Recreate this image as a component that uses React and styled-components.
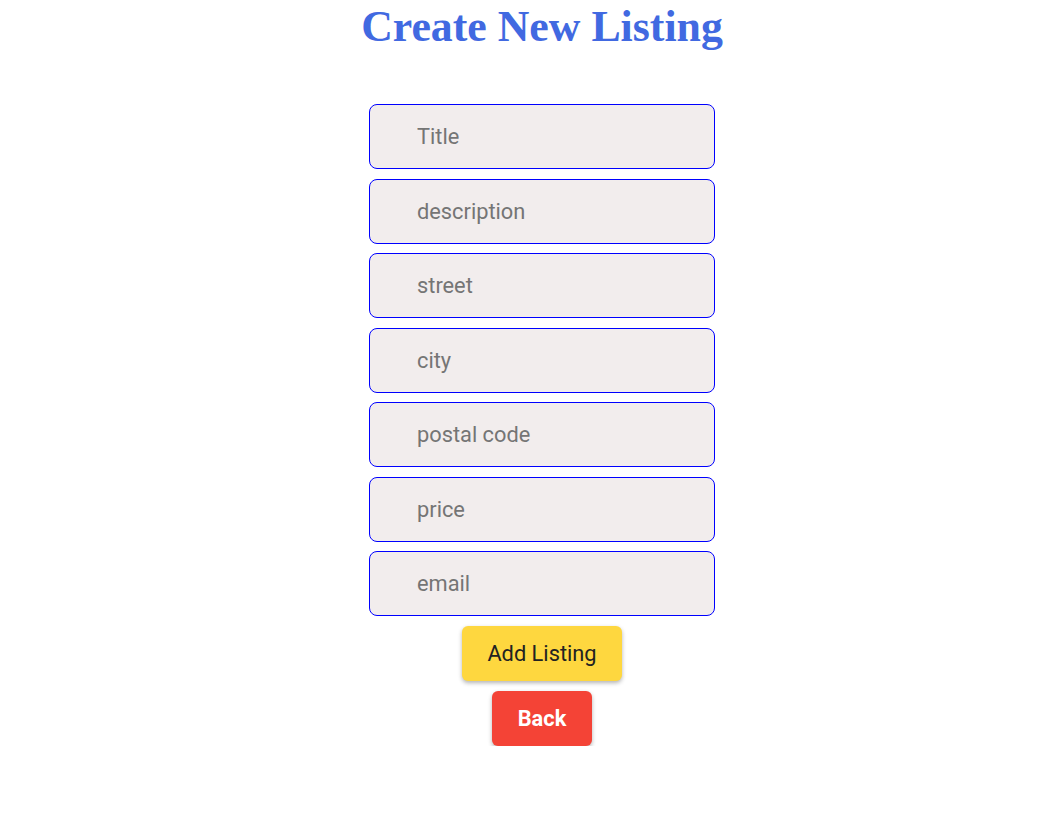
import React from 'react';
import styled, { createGlobalStyle } from 'styled-components';

const GlobalStyle = createGlobalStyle`
  body {
    margin: 0;
    background: #ffffff;
    font-family: Roboto, "Liberation Sans", sans-serif;
  }
`;

const Page = styled.div`
  display: flex;
  flex-direction: column;
  align-items: center;
  padding-left: 27px;
`;

const Title = styled.h1`
  margin: 0 0 52px;
  font-family: "Liberation Serif", "Times New Roman", serif;
  font-size: 43.8px;
  font-weight: 700;
  line-height: 52px;
  color: #4169e1;
`;

const Form = styled.form`
  display: flex;
  flex-direction: column;
  align-items: center;
  gap: 9.5px;
`;

const Field = styled.input`
  box-sizing: border-box;
  width: 346px;
  height: 65px;
  padding: 0 0 0 47px;
  border: 1px solid #0000ff;
  border-radius: 8px;
  background: #f2eded;
  font-family: Roboto, "Liberation Sans", sans-serif;
  font-size: 21.8px;
  color: #333;
  outline: none;

  &::placeholder {
    color: #757575;
  }
`;

const Button = styled.button`
  box-sizing: border-box;
  height: 55px;
  padding: 0 ${(p) => p.$pad}px;
  margin-top: ${(p) => p.$top || 0}px;
  border: none;
  border-radius: 6px;
  background: ${(p) => p.$bg};
  color: ${(p) => p.$color};
  font-family: Roboto, "Liberation Sans", sans-serif;
  font-size: 21.8px;
  font-weight: ${(p) => p.$weight};
  box-shadow: 0 2px 4px rgba(0, 0, 0, 0.3);
  cursor: pointer;
`;

const fields = ['Title', 'description', 'street', 'city', 'postal code', 'price', 'email'];

export default function App() {
  return (
    <Page>
      <GlobalStyle />
      <Title>Create New Listing</Title>
      <Form onSubmit={(e) => e.preventDefault()}>
        {fields.map((f) => (
          <Field key={f} placeholder={f} />
        ))}
        <Button type="submit" $bg="#fed73f" $color="#222" $weight={400} $pad={25}>
          Add Listing
        </Button>
        <Button type="button" $bg="#f44336" $color="#fff" $weight={700} $pad={26} $top={1}>
          Back
        </Button>
      </Form>
    </Page>
  );
}
